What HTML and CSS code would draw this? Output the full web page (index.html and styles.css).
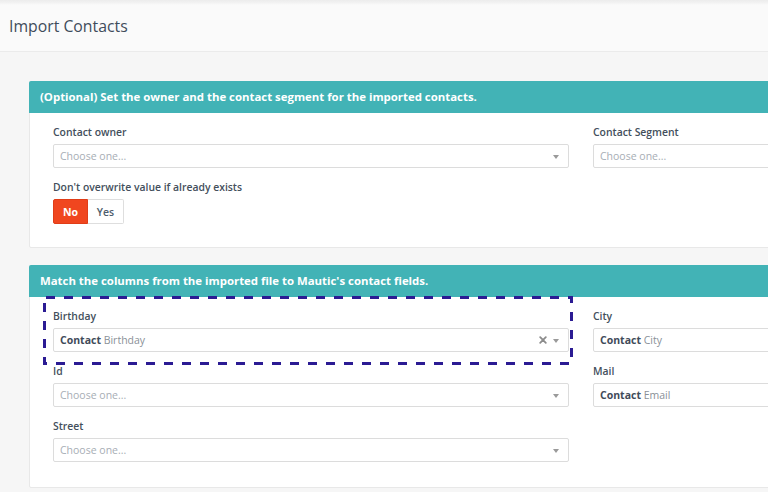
FILE: index.html
```html
<!DOCTYPE html>
<html lang="en">
<head>
<meta charset="utf-8">
<title>Import Contacts</title>
<link rel="stylesheet" href="styles.css">
</head>
<body>
<header class="page-header">
  <h1 class="page-title">Import Contacts</h1>
</header>
<main class="content">
  <section class="panel">
    <div class="panel-heading">(Optional) Set the owner and the contact segment for the imported contacts.</div>
    <div class="panel-body">
      <div class="col">
        <div class="form-group">
          <label class="control-label">Contact owner</label>
          <div class="select"><span class="placeholder">Choose one...</span><span class="caret"></span></div>
        </div>
        <div class="form-group">
          <label class="control-label">Don't overwrite value if already exists</label>
          <div class="btn-group">
            <span class="btn btn-no">No</span>
            <span class="btn btn-yes">Yes</span>
          </div>
        </div>
      </div>
      <div class="col">
        <div class="form-group">
          <label class="control-label">Contact Segment</label>
          <div class="select"><span class="placeholder">Choose one...</span></div>
        </div>
      </div>
    </div>
  </section>

  <section class="panel">
    <div class="panel-heading">Match the columns from the imported file to Mautic's contact fields.</div>
    <div class="panel-body">
      <div class="col">
        <div class="form-group highlighted">
          <label class="control-label">Birthday</label>
          <div class="select"><span class="value"><b>Contact</b> Birthday</span>
            <svg class="clear" width="8" height="8" viewBox="0 0 8 8"><path d="M1.2 1.2L6.8 6.8M6.8 1.2L1.2 6.8" stroke="#8c8c8c" stroke-width="1.8" stroke-linecap="round"/></svg>
            <span class="caret"></span></div>
          <svg class="annotation" width="530" height="69" viewBox="0 0 530 69">
            <path d="M2 1.5H528.5V67.5H1.5V1.5" fill="none" stroke="#2b1b93" stroke-width="3" stroke-dasharray="9 9" stroke-dashoffset="-1"/>
          </svg>
        </div>
        <div class="form-group">
          <label class="control-label">Id</label>
          <div class="select"><span class="placeholder">Choose one...</span><span class="caret"></span></div>
        </div>
        <div class="form-group">
          <label class="control-label">Street</label>
          <div class="select"><span class="placeholder">Choose one...</span><span class="caret"></span></div>
        </div>
      </div>
      <div class="col">
        <div class="form-group">
          <label class="control-label">City</label>
          <div class="select"><span class="value"><b>Contact</b> City</span></div>
        </div>
        <div class="form-group">
          <label class="control-label">Mail</label>
          <div class="select"><span class="value"><b>Contact</b> Email</span></div>
        </div>
      </div>
    </div>
  </section>
</main>
</body>
</html>
```

FILE: styles.css
```css
html, body {
  margin: 0;
  padding: 0;
  overflow: hidden;
  width: 768px;
  height: 492px;
}

body {
  background: #f6f6f6;
  font-family: "Open Sans", "Liberation Sans", sans-serif;
  color: #4e5d6c;
}

.page-header {
  height: 51px;
  background: linear-gradient(#ececec 0, #f3f3f3 3px, #fafafa 5px, #fafafa 100%);
  border-bottom: 1px solid #ebebeb;
  display: flex;
  align-items: center;
  padding-left: 9px;
}

.page-title {
  margin: 0;
  font-size: 15.8px;
  font-weight: 400;
  color: #3f4c5a;
  line-height: 20px;
  padding-top: 1px;
}

.content {
  padding: 29px 0 0 29px;
  display: flex;
  flex-direction: column;
  gap: 17px;
}

.panel {
  width: 860px;
  background: #fff;
  border: 1px solid #e8e8e8;
  border-radius: 2px;
}

.panel-heading {
  background: #42b3b6;
  color: #fff;
  font-weight: 700;
  font-size: 11.4px;
  height: 32px;
  line-height: 32px;
  padding-left: 11px;
  margin: -1px -1px 0 -1px;
  border-radius: 2px 2px 0 0;
}

.panel-body {
  display: grid;
  grid-template-columns: 516px 243px;
  column-gap: 24px;
  padding: 11px 0 12px 23px;
}

.panel + .panel .panel-body {
  padding-top: 11px;
  padding-bottom: 14px;
}

.form-group {
  display: flex;
  flex-direction: column;
  margin-bottom: 11px;
}

.highlighted {
  position: relative;
}

.control-label {
  font-size: 10.4px;
  font-weight: 600;
  line-height: 16px;
  height: 16px;
  margin-bottom: 4px;
  color: #434f5c;
}

.select {
  box-sizing: border-box;
  height: 24px;
  border: 1px solid #dcdcdc;
  border-radius: 2px;
  background: #fff;
  display: flex;
  align-items: center;
  padding: 0 9px 0 6px;
  font-size: 10.5px;
}

.placeholder {
  color: #a7aeb5;
  flex: 1;
}

.value {
  flex: 1;
  color: #8a9097;
}

.value b {
  color: #3f4c5a;
  font-weight: 700;
}

.clear {
  margin-right: 6px;
}

.caret {
  width: 0;
  height: 0;
  border-left: 3px solid transparent;
  border-right: 3px solid transparent;
  border-top: 4px solid #9a9a9a;
  margin-top: 1px;
}

.btn-group {
  display: flex;
}

.btn {
  box-sizing: border-box;
  height: 25px;
  display: flex;
  align-items: center;
  justify-content: center;
  font-size: 10.5px;
  font-weight: 600;
}

.btn-no {
  width: 35px;
  background: #f0461f;
  color: #fff;
  font-weight: 700;
  border: 1px solid #e03d18;
  border-radius: 2px 0 0 2px;
}

.btn-yes {
  width: 36px;
  background: #fff;
  color: #4e5d6c;
  border: 1px solid #dedede;
  border-left: 0;
  border-radius: 0 2px 2px 0;
}

.annotation {
  position: absolute;
  top: -12px;
  left: -10px;
  pointer-events: none;
}
```
